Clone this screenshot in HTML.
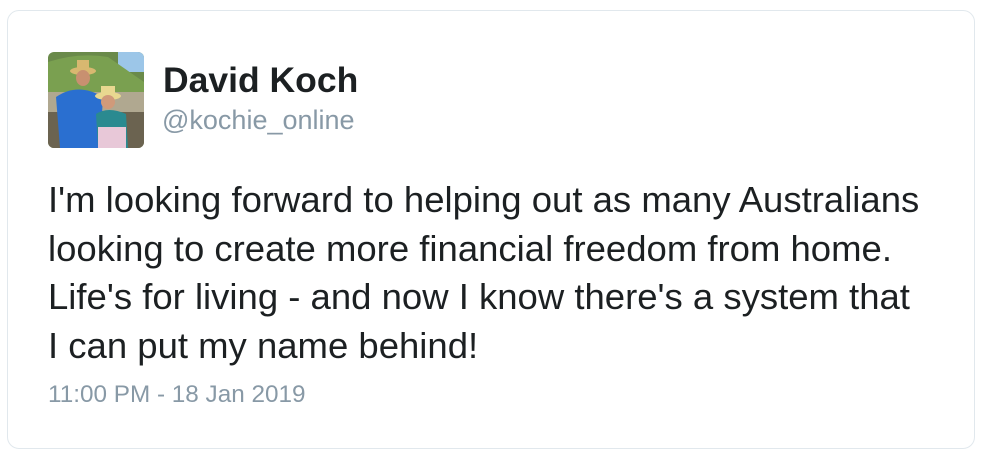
<!DOCTYPE html>
<html><head><meta charset="utf-8"><style>
html,body{margin:0;padding:0;background:#fff;width:984px;height:455px;overflow:hidden;font-family:"Liberation Sans",Arial,sans-serif;}
.card{position:absolute;left:7px;top:10px;width:968px;height:439px;border:1.5px solid #e1e8ed;border-radius:12px;box-sizing:border-box;}
.av{position:absolute;left:48px;top:52px;width:96px;height:96px;border-radius:6px;overflow:hidden;}
.name{position:absolute;left:163px;top:60px;font-size:35.5px;font-weight:bold;color:#1c2022;white-space:nowrap;}
.handle{position:absolute;left:162px;top:105px;font-size:27px;color:#8899a6;white-space:nowrap;}
.text{position:absolute;left:48px;top:176px;font-size:36.5px;line-height:48.5px;color:#1c2022;width:930px;white-space:nowrap;}
.date{position:absolute;left:48px;top:381px;font-size:24.3px;color:#8899a6;white-space:nowrap;}
</style></head><body>
<div class="card"></div>
<div class="av"><svg width="96" height="96" viewBox="0 0 96 96">
<rect width="96" height="96" fill="#6a8a4a"/>
<rect x="70" y="0" width="26" height="20" fill="#9cc6e8"/>
<path d="M0 10 Q30 0 60 5 L96 30 L96 45 L0 45Z" fill="#7aa050"/>
<rect x="0" y="40" width="96" height="20" fill="#b0a890"/>
<rect x="0" y="60" width="96" height="36" fill="#6b6350"/>
<ellipse cx="35" cy="19" rx="13" ry="4" fill="#d8b870"/>
<rect x="29" y="8" width="12" height="10" fill="#d8b870"/>
<ellipse cx="35" cy="26" rx="7" ry="8" fill="#c89070"/>
<path d="M8 45 Q30 30 55 45 L52 96 L12 96Z" fill="#2a6fd0"/>
<ellipse cx="60" cy="44" rx="13" ry="4" fill="#e8d890"/>
<rect x="53" y="34" width="14" height="10" fill="#e8d890"/>
<ellipse cx="60" cy="50" rx="7" ry="7" fill="#d09a7a"/>
<path d="M48 62 Q60 54 78 62 L80 96 L50 96Z" fill="#2a8a90"/>
<rect x="50" y="75" width="28" height="21" fill="#e8c8d8"/>
</svg></div>
<div class="name">David Koch</div>
<div class="handle">@kochie_online</div>
<div class="text">I'm looking forward to helping out as many Australians<br>looking to create more financial freedom from home.<br>Life's for living - and now I know there's a system that<br>I can put my name behind!</div>
<div class="date">11:00 PM - 18 Jan 2019</div>
</body></html>
